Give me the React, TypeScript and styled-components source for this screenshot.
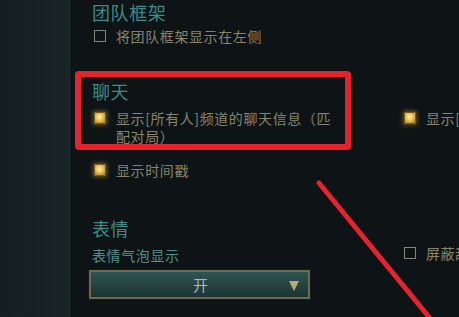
import styled, { createGlobalStyle } from "styled-components";

const GlobalStyle = createGlobalStyle`
	html, body {
		margin: 0;
		padding: 0;
		background: #0e1416;
		overflow: hidden;
	}
	body {
		font-family: "Noto Sans CJK SC", "Noto Sans", sans-serif;
	}
`;

export default function App() {
	return (
		<>
			<GlobalStyle />
			<PageStyled>
				<SidebarStyled />
				<MainStyled>
					<SectionStyled>
						<HeadingStyled>团队框架</HeadingStyled>
						<OptionStyled $top={3}>
							<BoxStyled />
							<LabelStyled>将团队框架显示在左侧</LabelStyled>
						</OptionStyled>
					</SectionStyled>

					<SectionStyled $gap={34}>
						<HeadingStyled>聊天</HeadingStyled>
						<ColumnsStyled>
							<ColumnStyled>
								<OptionStyled $top={6}>
									<BoxStyled $checked />
									<LabelStyled $wrap>显示[所有人]频道的聊天信息（匹配对局）</LabelStyled>
								</OptionStyled>
								<OptionStyled $top={16}>
									<BoxStyled $checked />
									<LabelStyled>显示时间戳</LabelStyled>
								</OptionStyled>
							</ColumnStyled>
							<ColumnStyled>
								<OptionStyled $top={6}>
									<BoxStyled $checked />
									<LabelStyled>显示[好友]频道的聊天信息</LabelStyled>
								</OptionStyled>
							</ColumnStyled>
						</ColumnsStyled>
						<MarkStyled />
					</SectionStyled>

					<SectionStyled $gap={37}>
						<HeadingStyled>表情</HeadingStyled>
						<ColumnsStyled>
							<ColumnStyled>
								<FieldLabelStyled>表情气泡显示</FieldLabelStyled>
								<SelectStyled>
									<span>开</span>
									<ArrowStyled />
								</SelectStyled>
							</ColumnStyled>
							<ColumnStyled>
								<OptionStyled $top={4}>
									<BoxStyled />
									<LabelStyled>屏蔽敌方表情</LabelStyled>
								</OptionStyled>
							</ColumnStyled>
						</ColumnsStyled>
					</SectionStyled>
				</MainStyled>
				<StrokeStyled viewBox="0 0 459 317" width="459" height="317">
					<line x1="319" y1="183" x2="438" y2="328" stroke="#e3232d" strokeWidth="5" strokeLinecap="round" />
				</StrokeStyled>
			</PageStyled>
		</>
	);
}

const PageStyled = styled.div`
	position: relative;
	display: flex;
	width: 459px;
	height: 317px;
	overflow: hidden;
	background: #0e1416;
`;

const SidebarStyled = styled.aside`
	flex: 0 0 71px;
	height: 100%;
	background: linear-gradient(90deg, #151e21 0%, #1a2528 100%);
	border-right: 1px solid #0a0f10;
`;

const MainStyled = styled.main`
	flex: 1;
	padding: 0 0 0 20px;
	min-width: 0;
`;

const SectionStyled = styled.section<{ $gap?: number }>`
	position: relative;
	margin-top: ${(p) => p.$gap ?? 0}px;
`;

const HeadingStyled = styled.h2`
	margin: 0;
	font-size: 18px;
	font-weight: 400;
	line-height: 24px;
	letter-spacing: 0.6px;
	color: #3d8b86;
`;

const ColumnsStyled = styled.div`
	display: grid;
	grid-template-columns: 310px 1fr;
`;

const ColumnStyled = styled.div`
	display: flex;
	flex-direction: column;
	min-width: 0;
`;

const OptionStyled = styled.div<{ $top: number }>`
	display: flex;
	align-items: flex-start;
	gap: 10px;
	margin-top: ${(p) => p.$top}px;
	padding-left: 2px;
	white-space: nowrap;
`;

const BoxStyled = styled.span<{ $checked?: boolean }>`
	flex: 0 0 auto;
	box-sizing: border-box;
	width: 12px;
	height: 12px;
	margin-top: 3px;
	border: ${(p) => (p.$checked ? "1px solid #7a5c18" : "1.5px solid #85857a")};
	background: ${(p) =>
		p.$checked ? "radial-gradient(circle at 45% 40%, #fff1a8 0%, #e6c25a 45%, #9c7420 100%)" : "transparent"};
	box-shadow: ${(p) => (p.$checked ? "0 0 4px 1px rgba(214, 170, 60, 0.45)" : "none")};
`;

const LabelStyled = styled.span<{ $wrap?: boolean }>`
	font-size: 14px;
	line-height: 18px;
	letter-spacing: 0.6px;
	color: #86846f;
	white-space: ${(p) => (p.$wrap ? "normal" : "nowrap")};
	width: ${(p) => (p.$wrap ? "224px" : "auto")};
	word-break: break-all;
`;

const FieldLabelStyled = styled.div`
	margin-top: 7px;
	font-size: 14px;
	line-height: 17px;
	letter-spacing: 0.6px;
	color: #53908a;
`;

const SelectStyled = styled.div`
	position: relative;
	box-sizing: border-box;
	display: flex;
	align-items: center;
	justify-content: center;
	width: 221px;
	height: 29px;
	margin: 6px 0 0 -3px;
	border: 2px solid #6a6a52;
	background: linear-gradient(180deg, #2e5553 0%, #24423f 55%, #1c3533 100%);
	box-shadow: 0 0 0 1px #121a1b;
	font-size: 15px;
	color: #b5b8a2;

	span {
		margin-left: 2px;
	}
`;

const ArrowStyled = styled.i`
	position: absolute;
	right: 9px;
	top: 9px;
	width: 0;
	height: 0;
	border-left: 5.5px solid transparent;
	border-right: 5.5px solid transparent;
	border-top: 10px solid #b6a97a;
`;

const MarkStyled = styled.div`
	position: absolute;
	left: -17px;
	top: -8px;
	width: 276px;
	height: 79px;
	box-sizing: border-box;
	border: 6px solid #e3232d;
	border-radius: 4px;
	pointer-events: none;
`;

const StrokeStyled = styled.svg`
	position: absolute;
	left: 0;
	top: 0;
	pointer-events: none;
`;
